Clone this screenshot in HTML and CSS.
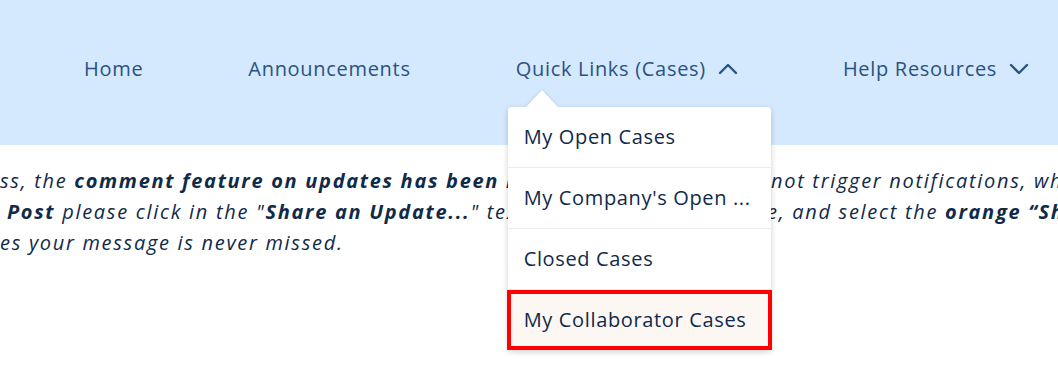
FILE: index.html
```html
<!DOCTYPE html>
<html>
<head>
<meta charset="utf-8">
<link rel="stylesheet" href="styles.css">
</head>
<body>
<div class="page">
  <nav class="nav">
    <a class="nav-item">Home</a>
    <a class="nav-item">Announcements</a>
    <div class="nav-item has-menu">
      <span>Quick Links (Cases)</span>
      <svg class="chev" width="20" height="12" viewBox="0 0 20 12"><path d="M2 10 L10 2 L18 10" fill="none" stroke="currentColor" stroke-width="2.4" stroke-linecap="round" stroke-linejoin="round"/></svg>
      <div class="menu">
        <div class="menu-caret"></div>
        <div class="menu-item">My Open Cases</div>
        <div class="menu-item">My Company's Open ...</div>
        <div class="menu-item">Closed Cases</div>
        <div class="menu-item active">My Collaborator Cases</div>
      </div>
    </div>
    <div class="nav-item">
      <span>Help Resources</span>
      <svg class="chev" width="20" height="12" viewBox="0 0 20 12"><path d="M2 2 L10 10 L18 2" fill="none" stroke="currentColor" stroke-width="2.4" stroke-linecap="round" stroke-linejoin="round"/></svg>
    </div>
  </nav>
  <div class="content">
    <div class="line"><span class="seg s1">ss, the <b>comment feature on updates has been removed, as comments do</b></span><span class="rest">not trigger notifications, which</span></div>
    <div class="line"><span class="seg s2">&nbsp;<b>Post</b> please click in the "<b>Share an Update...</b>" text box on your case pag</span><span class="rest">e, and select the <b>orange “Share”</b> button</span></div>
    <div class="line">es your message is never missed.</div>
  </div>
</div>
</body>
</html>
```
FILE: styles.css
```css
html, body {
  margin: 0;
  padding: 0;
  background: #ffffff;
}
.page {
  width: 1058px;
  height: 372px;
  overflow: hidden;
  font-family: "Open Sans", "DejaVu Sans", sans-serif;
}
.nav {
  background: #d4e9fd;
  height: 145px;
  box-sizing: border-box;
  padding: 55px 0 0 84px;
  display: flex;
  align-items: flex-start;
  gap: 105px;
}
.nav-item {
  display: flex;
  align-items: center;
  gap: 12px;
  color: #2a5282;
  font-size: 20px;
  font-weight: 500;
  letter-spacing: 0.7px;
  line-height: 28px;
  position: relative;
  white-space: nowrap;
}
.chev {
  display: block;
}
.menu {
  position: absolute;
  left: -8px;
  top: 52px;
  width: 263px;
  background: #ffffff;
  border-radius: 4px;
  box-shadow: 0 2px 6px rgba(0, 0, 0, 0.18);
  z-index: 5;
}
.menu-caret {
  position: absolute;
  left: 18px;
  top: -17px;
  width: 0;
  height: 0;
  border-left: 16px solid transparent;
  border-right: 16px solid transparent;
  border-bottom: 17px solid #ffffff;
  filter: drop-shadow(0 -1px 1px rgba(0,0,0,0.1));
}
.menu-item {
  height: 61px;
  box-sizing: border-box;
  padding: 0 16px;
  display: flex;
  align-items: center;
  color: #0f2a4a;
  font-size: 20px;
  font-weight: 500;
  letter-spacing: 0.65px;
  border-bottom: 1px solid #ebebeb;
}
.menu-item.active {
  background: #fcf7f3;
  border: 4px solid #ff0000;
  margin: 0 -1px;
  padding-left: 13px;
  height: 60px;
}
.content {
  padding-top: 20px;
}
.line {
  white-space: nowrap;
  font-style: italic;
  font-size: 20px;
  line-height: 31px;
  color: #102a4a;
  letter-spacing: 1.7px;
}
.line b {
  font-weight: 700;
}
.seg {
  display: inline-block;
  vertical-align: top;
  overflow: hidden;
}
.s1 {
  width: 771px;
}
.s2 {
  width: 767px;
}
```
